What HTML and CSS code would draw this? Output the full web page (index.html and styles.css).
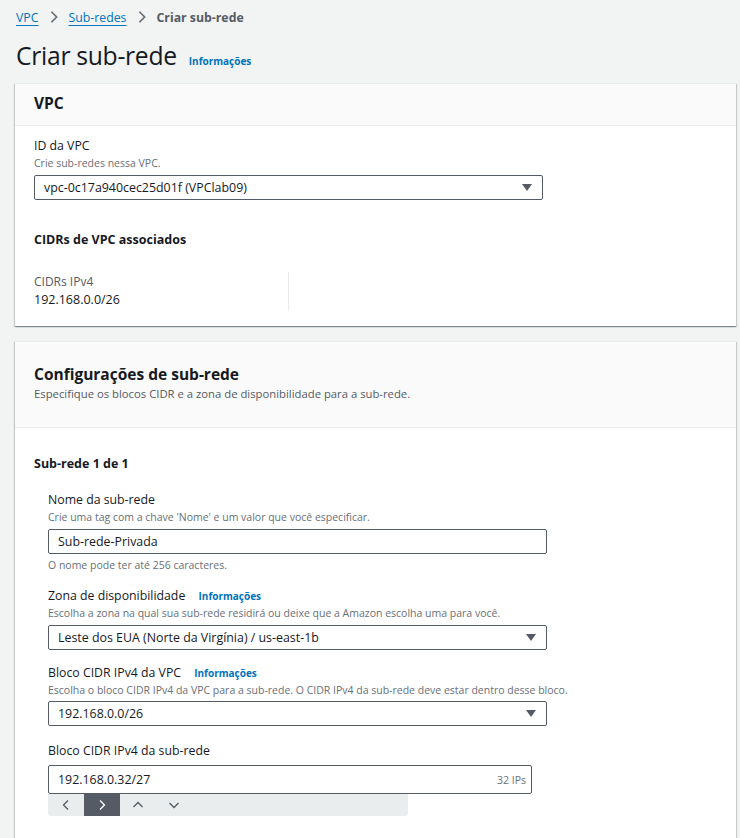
FILE: index.html
```html
<!DOCTYPE html>
<html lang="pt-BR">
<head>
<meta charset="utf-8">
<link rel="stylesheet" href="styles.css">
</head>
<body>
<div class="page">
  <nav class="crumbs">
    <a class="crumb-link">VPC</a>
    <svg class="chev" viewBox="0 0 16 16" width="14" height="14"><path d="M5 2l6 6-6 6" fill="none" stroke="#687078" stroke-width="2"/></svg>
    <a class="crumb-link">Sub-redes</a>
    <svg class="chev" viewBox="0 0 16 16" width="14" height="14"><path d="M5 2l6 6-6 6" fill="none" stroke="#687078" stroke-width="2"/></svg>
    <span class="crumb-current">Criar sub-rede</span>
  </nav>
  <div class="title-row">
    <h1 class="title">Criar sub-rede</h1>
    <a class="info">Informações</a>
  </div>

  <section class="card card-vpc">
    <header class="card-head small">
      <h2 class="card-title">VPC</h2>
    </header>
    <div class="card-body">
      <div class="field">
        <div class="label">ID da VPC</div>
        <div class="desc">Crie sub-redes nessa VPC.</div>
        <div class="select wide"><span>vpc-0c17a940cec25d01f (VPClab09)</span><span class="caret"></span></div>
      </div>
      <h3 class="sub-title">CIDRs de VPC associados</h3>
      <div class="kv-row">
        <div class="kv">
          <div class="kv-key">CIDRs IPv4</div>
          <div class="kv-val">192.168.0.0/26</div>
        </div>
      </div>
    </div>
  </section>

  <section class="card card-config">
    <header class="card-head big">
      <h2 class="card-title">Configurações de sub-rede</h2>
      <div class="head-desc">Especifique os blocos CIDR e a zona de disponibilidade para a sub-rede.</div>
    </header>
    <div class="card-body2">
      <h3 class="subnet-title">Sub-rede 1 de 1</h3>
      <div class="subnet">
        <div class="field f1">
          <div class="label">Nome da sub-rede</div>
          <div class="desc">Crie uma tag com a chave 'Nome' e um valor que você especificar.</div>
          <div class="input">Sub-rede-Privada</div>
          <div class="hint">O nome pode ter até 256 caracteres.</div>
        </div>
        <div class="field f2">
          <div class="label">Zona de disponibilidade <a class="info">Informações</a></div>
          <div class="desc">Escolha a zona na qual sua sub-rede residirá ou deixe que a Amazon escolha uma para você.</div>
          <div class="select"><span>Leste dos EUA (Norte da Virgínia) / us-east-1b</span><span class="caret"></span></div>
        </div>
        <div class="field f3">
          <div class="label">Bloco CIDR IPv4 da VPC <a class="info">Informações</a></div>
          <div class="desc">Escolha o bloco CIDR IPv4 da VPC para a sub-rede. O CIDR IPv4 da sub-rede deve estar dentro desse bloco.</div>
          <div class="select"><span>192.168.0.0/26</span><span class="caret"></span></div>
        </div>
        <div class="field f4">
          <div class="label">Bloco CIDR IPv4 da sub-rede</div>
          <div class="input cidr"><span>192.168.0.32/27</span><span class="ips">32 IPs</span></div>
          <div class="stepper">
            <span class="step"><svg viewBox="0 0 12 12" width="12" height="12"><path d="M8 1.5L3.5 6 8 10.5" fill="none" stroke="#545b64" stroke-width="1.3"/></svg></span>
            <span class="step active"><svg viewBox="0 0 12 12" width="12" height="12"><path d="M4 1.5L8.5 6 4 10.5" fill="none" stroke="#ffffff" stroke-width="1.3"/></svg></span>
            <span class="step"><svg viewBox="0 0 12 12" width="12" height="12"><path d="M1.5 8L6 3.5 10.5 8" fill="none" stroke="#545b64" stroke-width="1.3"/></svg></span>
            <span class="step"><svg viewBox="0 0 12 12" width="12" height="12"><path d="M1.5 4L6 8.5 10.5 4" fill="none" stroke="#545b64" stroke-width="1.3"/></svg></span>
          </div>
        </div>
      </div>
    </div>
  </section>
</div>
</body>
</html>
```

FILE: styles.css
```css
* { box-sizing: border-box; }
html, body { margin: 0; padding: 0; }
body {
  background: #f2f3f3;
  font-family: "Open Sans", "Noto Sans", sans-serif;
  color: #16191f;
  width: 740px;
  height: 838px;
  overflow: hidden;
}
.page { padding: 6px 4px 0 15px; }

.crumbs { display: flex; align-items: center; height: 22px; padding-left: 1px; font-size: 12.3px; }
.crumb-link { color: #0073bb; text-decoration: underline; text-underline-offset: 3px; text-decoration-color: #0073bb; }
.chev { margin: 0 7px 0 9px; }
.crumb-current { color: #545b64; font-weight: 700; }

.title-row { display: flex; align-items: baseline; padding: 11px 0 0 1px; height: 52px; }
.title { margin: 0; font-size: 24.7px; font-weight: 400; letter-spacing: -0.3px; }
.info { color: #0073bb; font-weight: 700; font-size: 10px; margin-left: 12px; }

.card { background: #fff; border-top: 1px solid #eaeded; box-shadow: 0 1px 1px 0 rgba(0,28,36,.3), 1px 1px 1px 0 rgba(0,28,36,.15), -1px 1px 1px 0 rgba(0,28,36,.15); }
.card-vpc { margin-top: 3px; height: 243px; }
.card-config { margin-top: 15px; height: 520px; }
.card-head { background: #fafafa; border-bottom: 1px solid #eaeded; padding: 0 19px; }
.card-head.small { height: 42px; display: flex; align-items: center; padding-bottom: 3px; }
.card-head.big { height: 86px; padding-top: 22px; }
.card-title { margin: 0; font-size: 15.5px; font-weight: 700; line-height: 20px; }
.head-desc { font-size: 11.3px; color: #545b64; margin-top: 2px; }

.card-body { padding: 11px 19px 0; }
.label { font-size: 12.3px; line-height: 18px; color: #16191f; }
.label .info { margin-left: 10px; }
.desc { font-size: 10.5px; line-height: 16px; color: #687078; }
.select, .input {
  margin-top: 4px;
  height: 25px;
  border: 1px solid #545b64;
  border-radius: 2px;
  display: flex;
  align-items: center;
  justify-content: space-between;
  padding: 0 10px 0 9px;
  font-size: 12.4px;
  color: #16191f;
  width: 499px;
}
.select.wide { width: 509px; }
.caret { width: 0; height: 0; border-left: 5px solid transparent; border-right: 5px solid transparent; border-top: 7px solid #545b64; }

.sub-title { margin: 31px 0 0; font-size: 12.5px; font-weight: 700; line-height: 18px; }
.kv-row { margin-top: 23px; display: flex; }
.kv { width: 255px; border-right: 1px solid #eaeded; height: 39px; }
.kv-key { font-size: 12px; color: #545b64; line-height: 18px; margin-top: 1px; }
.kv-val { font-size: 12.5px; line-height: 18px; margin-top: 0; }

.card-body2 { padding: 27px 19px 0; }
.subnet-title { margin: 0; font-size: 12.5px; font-weight: 700; line-height: 18px; }
.subnet { padding-left: 14px; padding-top: 18px; }
.hint { font-size: 10.5px; color: #687078; margin-top: 3px; line-height: 16px; }
.f2 { margin-top: 14px; }
.f3 { margin-top: 14px; }
.f4 { margin-top: 16px; }
.f2 .select { margin-top: 4px; }
.f3 .select { margin-top: 3px; }
.input.cidr { width: 484px; height: 29px; margin-top: 5px; }
.ips { font-size: 10.5px; color: #687078; margin-right: -5px; }
.stepper { width: 360px; height: 22px; background: #eaeded; border-radius: 0 0 3px 3px; display: flex; }
.step { width: 36px; height: 22px; display: flex; align-items: center; justify-content: center; }
.step.active { background: #545b64; }
```
